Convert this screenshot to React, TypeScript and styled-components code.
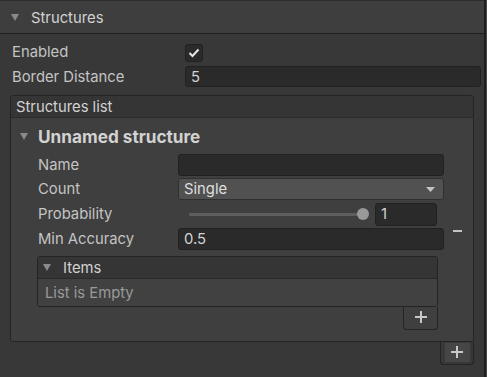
import React from 'react';
import styled, { createGlobalStyle, css } from 'styled-components';

const GlobalStyle = createGlobalStyle`
  html, body {
    margin: 0;
    padding: 0;
    background: #383838;
  }
  body {
    font-family: Inter, 'Noto Sans', sans-serif;
    font-size: 14.8px;
    color: #c4c4c4;
  }
`;

const fieldBox = css`
  box-sizing: border-box;
  background: #2a2a2a;
  border: 1px solid #212121;
  border-radius: 3px;
  color: #d2d2d2;
  font-size: 14.8px;
  display: flex;
  align-items: center;
  padding: 0 5px;
`;

const Page = styled.div`
  display: flex;
  width: 487px;
  height: 377px;
  overflow: hidden;
`;

const Panel = styled.div`
  width: 484px;
  display: flex;
  flex-direction: column;
`;

const Edge = styled.div`
  width: 1px;
  border-left: 2px solid #1e1e1e;
  background: #4a4a4a;
`;

const InspectorHeader = styled.div`
  box-sizing: border-box;
  height: 34px;
  padding: 1px 0 0 11px;
  border-top: 1px solid #2c2c2c;
  border-bottom: 1px solid #1f1f1f;
  background: #3e3e3e;
  display: flex;
  align-items: center;
  gap: 12px;
  color: #d2d2d2;
`;

const Body = styled.div`
  display: flex;
  flex-direction: column;
  padding: 7px 3px 0 11px;
`;

const Rows = styled.div`
  display: flex;
  flex-direction: column;
  gap: 4px;
`;

const Row = styled.div<{ $h?: number }>`
  display: flex;
  align-items: center;
  height: ${({ $h }) => $h ?? 21}px;
`;

const Label = styled.div<{ $w: number }>`
  width: ${({ $w }) => $w}px;
  flex-shrink: 0;
  color: #c4c4c4;
  padding-left: 1px;
  box-sizing: border-box;
`;

const Field = styled.div<{ $w?: number; $h?: number }>`
  ${fieldBox};
  height: ${({ $h }) => $h ?? 22}px;
  ${({ $w }) => ($w ? `width: ${$w}px;` : 'flex: 1;')}
`;

const Checkbox = styled.div`
  ${fieldBox};
  width: 18px;
  height: 18px;
  padding: 0;
  justify-content: center;
  margin-top: 2px;
`;

const Dropdown = styled.div`
  ${fieldBox};
  flex: 1;
  height: 22px;
  background: #515151;
  border-color: #303030;
  color: #dedede;
  justify-content: space-between;
  padding-right: 8px;
`;

const ListBox = styled.div`
  margin: 8px 7px 0 -1px;
  display: flex;
  flex-direction: column;
`;

const ListFrame = styled.div`
  border: 1px solid #242424;
  border-radius: 3px;
  overflow: hidden;
`;

const ListHeader = styled.div`
  height: 21px;
  background: #353535;
  border-bottom: 1px solid #2a2a2a;
  display: flex;
  align-items: center;
  gap: 12px;
  padding-left: 5px;
  color: #d2d2d2;
`;

const ListBody = styled.div<{ $bg: string }>`
  background: ${({ $bg }) => $bg};
`;

const ItemRow = styled.div`
  display: flex;
  padding: 5px 0 11px 9px;
`;

const ItemContent = styled.div`
  flex: 1;
  display: flex;
  flex-direction: column;
`;

const FoldoutTitle = styled.div`
  height: 27px;
  display: flex;
  align-items: center;
  gap: 10px;
  font-size: 17.2px;
  font-weight: 700;
  color: #d2d2d2;
`;

const ItemFields = styled.div`
  display: flex;
  flex-direction: column;
  gap: 2px;
  padding-left: 17px;
  margin-top: 4px;
`;

const RemoveColumn = styled.div`
  box-sizing: border-box;
  width: 29px;
  display: flex;
  align-items: center;
  justify-content: center;
  padding: 8px 2px 0 0;
`;

const Minus = styled.div`
  width: 9px;
  height: 2px;
  background: #c4c4c4;
`;

const Slider = styled.div`
  flex: 1;
  display: flex;
  align-items: center;
  padding-left: 11px;
  margin-right: 6px;
`;

const Track = styled.div`
  flex: 1;
  height: 3px;
  border-radius: 2px;
  background: #5e5e5e;
`;

const Thumb = styled.div`
  width: 12px;
  height: 12px;
  border-radius: 50%;
  background: #999999;
  margin-left: -6px;
`;

const EmptyText = styled.div`
  height: 27px;
  display: flex;
  align-items: center;
  padding-left: 7px;
  color: #9a9a9a;
`;

const SubList = styled.div`
  margin: 4px 6px 0 0;
  display: flex;
  flex-direction: column;
`;

const Footer = styled.div<{ $w: number }>`
  align-self: flex-end;
  width: ${({ $w }) => $w}px;
  height: 23px;
  box-sizing: border-box;
  border: 1px solid #242424;
  border-top: none;
  border-radius: 0 0 4px 4px;
  display: flex;
  align-items: center;
  justify-content: center;
`;

const PlusButton = styled.div<{ $hover?: boolean }>`
  width: 25px;
  height: 19px;
  margin-top: -2px;
  background: ${({ $hover }) => ($hover ? '#464646' : 'transparent')};
  display: flex;
  align-items: center;
  justify-content: center;
`;

const Triangle = ({ color = '#8a8a8a' }: { color?: string }) => (
  <svg width="8" height="7" viewBox="0 0 8 7">
    <path d="M0 0 H8 L4 7 Z" fill={color} />
  </svg>
);

const Plus = () => (
  <svg width="12" height="12" viewBox="0 0 12 12">
    <path d="M5 0 H7 V5 H12 V7 H7 V12 H5 V7 H0 V5 H5 Z" fill="#c8c8c8" />
  </svg>
);

const Check = () => (
  <svg width="12" height="10" viewBox="0 0 12 10">
    <path d="M1.5 5 L4.5 8 L10.5 1.5" stroke="#e6e6e6" strokeWidth="2" fill="none" />
  </svg>
);

const Arrow = () => (
  <svg width="9" height="5" viewBox="0 0 9 5">
    <path d="M0 0 H9 L4.5 5 Z" fill="#c4c4c4" />
  </svg>
);

export default function App() {
  return (
    <Page>
      <GlobalStyle />
      <Panel>
        <InspectorHeader>
          <Triangle />
          <span>Structures</span>
        </InspectorHeader>
        <Body>
          <Rows>
            <Row>
              <Label $w={174}>Enabled</Label>
              <Checkbox>
                <Check />
              </Checkbox>
            </Row>
            <Row>
              <Label $w={174}>Border Distance</Label>
              <Field $h={21}>5</Field>
            </Row>
          </Rows>
          <ListBox>
            <ListFrame>
              <ListHeader>Structures list</ListHeader>
              <ListBody $bg="#3f3f3f">
                <ItemRow>
                  <ItemContent>
                    <FoldoutTitle>
                      <Triangle />
                      <span>Unnamed structure</span>
                    </FoldoutTitle>
                    <ItemFields>
                      <Row $h={22}>
                        <Label $w={141}>Name</Label>
                        <Field />
                      </Row>
                      <Row $h={22}>
                        <Label $w={141}>Count</Label>
                        <Dropdown>
                          <span>Single</span>
                          <Arrow />
                        </Dropdown>
                      </Row>
                      <Row $h={24}>
                        <Label $w={141}>Probability</Label>
                        <Slider>
                          <Track />
                          <Thumb />
                        </Slider>
                        <Field $w={62} $h={23} style={{ marginRight: 7 }}>
                          1
                        </Field>
                      </Row>
                      <Row $h={22}>
                        <Label $w={141}>Min Accuracy</Label>
                        <Field>0.5</Field>
                      </Row>
                      <SubList>
                        <ListFrame>
                          <ListHeader>
                            <Triangle />
                            <span>Items</span>
                          </ListHeader>
                          <ListBody $bg="#414141">
                            <EmptyText>List is Empty</EmptyText>
                          </ListBody>
                        </ListFrame>
                        <Footer $w={35}>
                          <PlusButton>
                            <Plus />
                          </PlusButton>
                        </Footer>
                      </SubList>
                    </ItemFields>
                  </ItemContent>
                  <RemoveColumn>
                    <Minus />
                  </RemoveColumn>
                </ItemRow>
              </ListBody>
            </ListFrame>
            <Footer $w={34}>
              <PlusButton $hover>
                <Plus />
              </PlusButton>
            </Footer>
          </ListBox>
        </Body>
      </Panel>
      <Edge />
    </Page>
  );
}
